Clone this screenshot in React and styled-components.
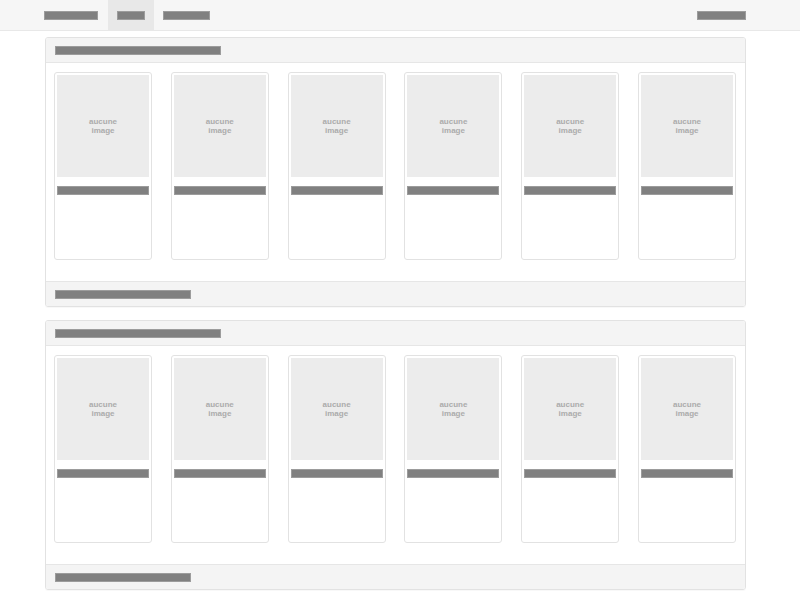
import styled, { createGlobalStyle } from 'styled-components';

const GlobalStyle = createGlobalStyle`
  * {
    box-sizing: border-box;
  }
  body {
    margin: 0;
    background: #fff;
    font-family: "Liberation Sans", Arial, sans-serif;
  }
`;

const Bar = styled.div`
  width: ${(p) => p.w}px;
  height: ${(p) => p.h || 9}px;
  background: #808080;
  border: 1px solid #9c9c9c;
`;

const Navbar = styled.div`
  height: 31px;
  background: #f6f6f6;
  border-bottom: 1px solid #e8e8e8;
  display: flex;
  align-items: stretch;
  padding: 0 54px 0 35px;
`;

const NavItem = styled.div`
  display: flex;
  align-items: center;
  padding: 0 9px;
  margin-left: ${(p) => p.ml || 0}px;
  background: ${(p) => (p.active ? '#e8e8e8' : 'transparent')};
`;

const NavRight = styled.div`
  margin-left: auto;
  display: flex;
  align-items: center;
`;

const Page = styled.div`
  width: 701px;
  margin: 6px 0 0 45px;
`;

const Panel = styled.div`
  border: 1px solid #e2e2e2;
  border-radius: 3px;
  margin-bottom: 13px;
  overflow: hidden;
  box-shadow: 0 1px 1px rgba(0, 0, 0, 0.03);
`;

const PanelHeading = styled.div`
  height: 25px;
  background: #f4f4f4;
  border-bottom: 1px solid #e6e6e6;
  display: flex;
  align-items: center;
  padding-left: 9px;
`;

const PanelBody = styled.div`
  display: grid;
  grid-template-columns: repeat(6, 1fr);
  column-gap: 18.8px;
  padding: 9px 10px 21px 8px;
`;

const PanelFooter = styled.div`
  height: 25px;
  background: #f4f4f4;
  border-top: 1px solid #e6e6e6;
  display: flex;
  align-items: center;
  padding-left: 9px;
`;

const Card = styled.div`
  height: 188px;
  border: 1px solid #e2e2e2;
  border-radius: 3px;
  padding: 2px;
`;

const Thumb = styled.div`
  height: 102px;
  background: #ececec;
  display: flex;
  align-items: center;
  justify-content: center;
  text-align: center;
  color: #ababab;
  font-size: 8px;
  font-weight: bold;
  line-height: 9px;
`;

const Caption = styled.div`
  margin-top: 9px;
`;

const Thumbnail = () => (
  <Card>
    <Thumb>
      aucune
      <br />
      image
    </Thumb>
    <Caption>
      <Bar w={92} h={9} />
    </Caption>
  </Card>
);

const Section = () => (
  <Panel>
    <PanelHeading>
      <Bar w={166} h={9} />
    </PanelHeading>
    <PanelBody>
      {[0, 1, 2, 3, 4, 5].map((i) => (
        <Thumbnail key={i} />
      ))}
    </PanelBody>
    <PanelFooter>
      <Bar w={136} h={9} />
    </PanelFooter>
  </Panel>
);

export default function App() {
  return (
    <>
      <GlobalStyle />
      <Navbar>
        <NavItem>
          <Bar w={54} h={9} />
        </NavItem>
        <NavItem active ml={1}>
          <Bar w={28} h={9} />
        </NavItem>
        <NavItem>
          <Bar w={47} h={9} />
        </NavItem>
        <NavRight>
          <Bar w={49} h={9} />
        </NavRight>
      </Navbar>
      <Page>
        <Section />
        <Section />
      </Page>
    </>
  );
}
